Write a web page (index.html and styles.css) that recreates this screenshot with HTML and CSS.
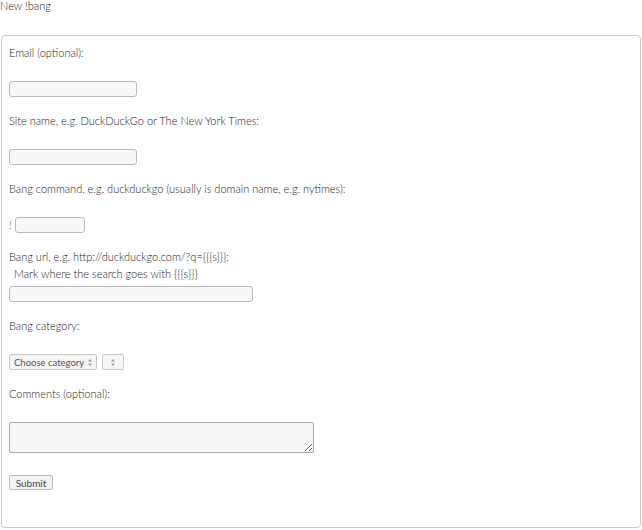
FILE: index.html
```html
<!DOCTYPE html>
<html>
  <head>
    <meta charset="utf-8">
    <title>New !bang</title>
    <link rel="stylesheet" href="styles.css">
  </head>
  <body>
    <div class="title">New !bang</div>

    <form class="bangform" onsubmit="return false">
      <div class="label" id="lEmail">Email (optional):</div>
      <input class="text" id="email" type="text">

      <div class="label">Site name, e.g. DuckDuckGo or The New York Times:</div>
      <input class="text" id="site" type="text">

      <div class="label">Bang command, e.g. duckduckgo (usually is domain name, e.g. nytimes):</div>
      <div class="bangrow">! <input class="text" id="bang" type="text"></div>

      <div class="label">Bang url, e.g. http://duckduckgo.com/?q={{{s}}}:</div>
      <div class="hint">Mark where the search goes with {{{s}}}</div>
      <input class="text" id="url" type="text">

      <div class="label">Bang category:</div>
      <div class="selects">
        <span class="select" id="cat">
          <span class="seltext">Choose category</span>
          <svg width="6" height="9" viewBox="0 0 6 9"><path d="M3 1 L5 3.5 H1 Z M3 8 L1 5.5 H5 Z" fill="#999"/></svg>
        </span>
        <span class="select" id="subcat">
          <svg width="6" height="9" viewBox="0 0 6 9"><path d="M3 1 L5 3.5 H1 Z M3 8 L1 5.5 H5 Z" fill="#999"/></svg>
        </span>
      </div>

      <div class="label">Comments (optional):</div>
      <textarea id="comments"></textarea>

      <button class="submit" type="submit">Submit</button>
    </form>
  </body>
</html>
```

FILE: styles.css
```css
      body        {margin:0px; font-family:Lato,"Open Sans",sans-serif; font-weight:300; font-size:11px; color:#222;
                   background-color:white;}
      .title      {line-height:12px; padding-left:0px;}

      /* the form is drawn as a light rounded box */
      .bangform   {margin:23px 1px 3px 1px; border:1px solid #ccc; border-radius:4px;
                   padding:11px 7px 37px 7px; display:flex; flex-direction:column; align-items:flex-start;}
      .label      {line-height:12px; margin-top:18px; margin-bottom:22px; white-space:nowrap}
      #lEmail     {margin-top:0px}
      .hint       {line-height:12px; margin:-17px 0px 6px 5px; white-space:nowrap}

      .text       {box-sizing:border-box; height:16px; margin:0px; padding:0px 3px; border:1px solid #bbb;
                   border-radius:3px; background-color:#f8f8f8; font:inherit;}
      #email,#site {width:128px}
      #bang       {width:70px; margin-left:3px}
      #url        {width:244px}
      .bangrow    {display:flex; align-items:center; line-height:12px; color:#555}

      .selects    {display:flex; gap:5px; margin-bottom:0px}
      .select     {box-sizing:border-box; height:16px; border:1px solid #c8c8c8; border-radius:2px;
                   background-color:#f6f6f6; display:flex; align-items:center; font-size:9.5px; font-weight:400;
                   padding:0px 3px 0px 4px; color:#555; white-space:nowrap; overflow:hidden}
      #cat        {width:88px; justify-content:space-between}
      #subcat     {width:22px; justify-content:center; padding:0px}

      textarea    {box-sizing:border-box; width:305px; height:31px; margin:0px; border:1px solid #aaa;
                   border-radius:2px; background-color:#f8f8f8; font:inherit; resize:both;}

      .submit     {box-sizing:border-box; margin-top:22px; width:44px; height:15px; padding:0px;
                   font-family:inherit; font-size:10px; font-weight:400; color:#444; border:1px solid #bbb;
                   border-radius:2px; background-color:#f4f4f4;}
```
